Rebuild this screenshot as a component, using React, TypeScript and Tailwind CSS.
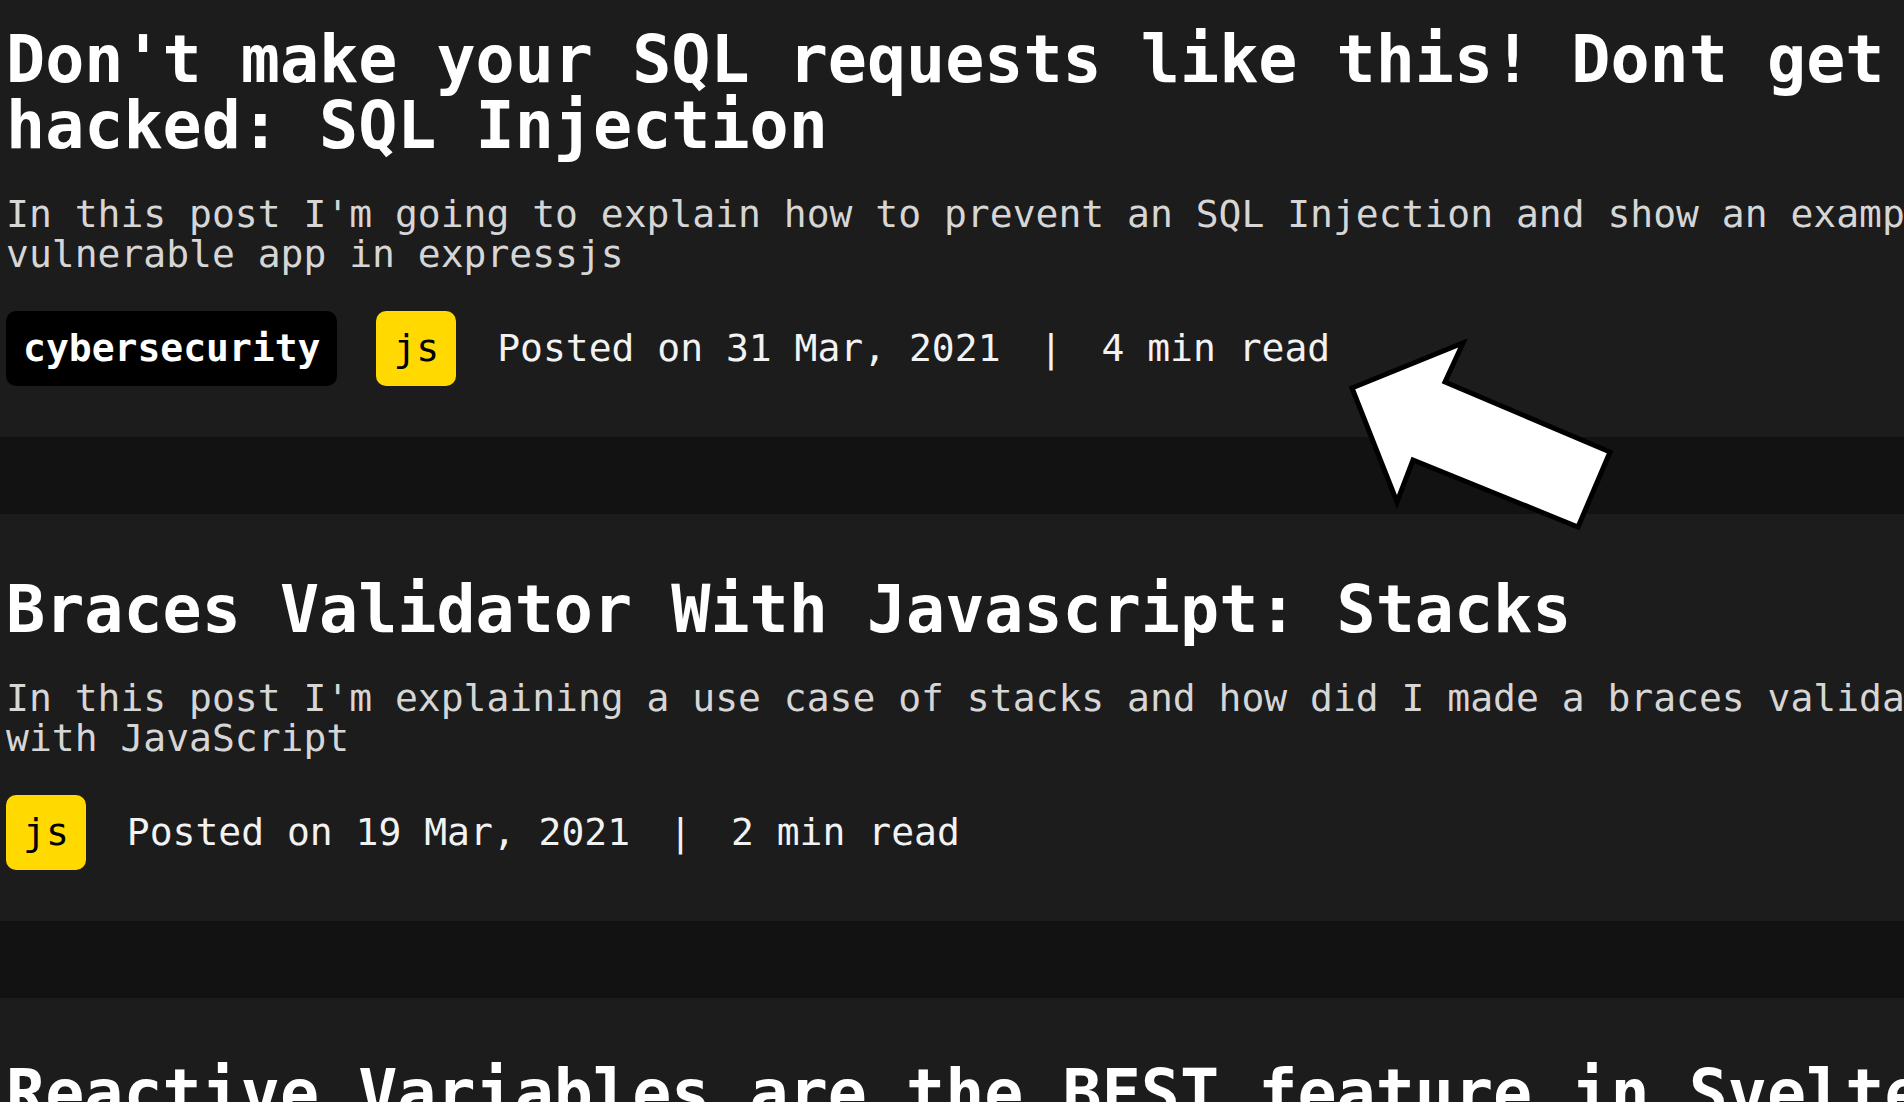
import React from "react";

interface Post {
  title: string;
  description: string;
  tags: { name: string; kind: "dark" | "js" }[];
  date: string;
  readTime: string;
}

const posts: Post[] = [
  {
    title: "Don't make your SQL requests like this! Dont get hacked: SQL Injection",
    description:
      "In this post I'm going to explain how to prevent an SQL Injection and show an example of a vulnerable app in expressjs",
    tags: [
      { name: "cybersecurity", kind: "dark" },
      { name: "js", kind: "js" },
    ],
    date: "31 Mar, 2021",
    readTime: "4 min read",
  },
  {
    title: "Braces Validator With Javascript: Stacks",
    description:
      "In this post I'm explaining a use case of stacks and how did I made a braces validator with JavaScript",
    tags: [{ name: "js", kind: "js" }],
    date: "19 Mar, 2021",
    readTime: "2 min read",
  },
  {
    title: "Reactive Variables are the BEST feature in Svelte",
    description: "In this post I'm showing why reactive variables are the best feature in Svelte",
    tags: [{ name: "js", kind: "js" }],
    date: "10 Mar, 2021",
    readTime: "3 min read",
  },
];

function PostCard({ post, first }: { post: Post; first?: boolean }) {
  return (
    <article className={`bg-[#1c1c1c] pl-[6px] pb-[51px] ${first ? "pt-[27px]" : "pt-[63px]"}`}>
      <div className="w-[2072px]">
        <h2 className="text-[65px] leading-[66px] font-bold text-white">{post.title}</h2>
        <p className="mt-[35px] text-[38px] leading-[40px] text-[#d6d6d6]">{post.description}</p>
      </div>
      <div className="mt-[37px] flex items-center">
        {post.tags.map((tag) => (
          <span
            key={tag.name}
            className={
              tag.kind === "dark"
                ? "mr-[39px] h-[75px] flex items-center rounded-[10px] bg-black px-[17px] text-[38px] font-bold text-white"
                : "mr-[41px] h-[75px] flex items-center rounded-[10px] bg-[#ffd900] px-[17px] text-[38px] text-black"
            }
          >
            {tag.name}
          </span>
        ))}
        <span className="text-[38px] text-[#f2f2f2]">Posted on {post.date}</span>
        <span className="mx-[39px] text-[38px] text-[#f2f2f2]">|</span>
        <span className="text-[38px] text-[#f2f2f2]">{post.readTime}</span>
      </div>
    </article>
  );
}

export default function App() {
  return (
    <div className="relative h-[1102px] w-[1904px] overflow-hidden bg-[#121212] font-['DejaVu_Sans_Mono','Liberation_Mono',monospace]">
      <div className="flex w-[2100px] flex-col gap-[77px]">
        {posts.map((post, i) => (
          <PostCard key={post.title} post={post} first={i === 0} />
        ))}
      </div>

      {/* annotation arrow */}
      <svg className="absolute left-0 top-0" width="1904" height="1102" viewBox="0 0 1904 1102">
        <polygon
          points="1352,388 1463,343 1445,382 1610,452 1578,527 1413,460 1397,502"
          fill="#ffffff"
          stroke="#000000"
          strokeWidth="5"
          strokeLinejoin="miter"
        />
      </svg>
    </div>
  );
}
